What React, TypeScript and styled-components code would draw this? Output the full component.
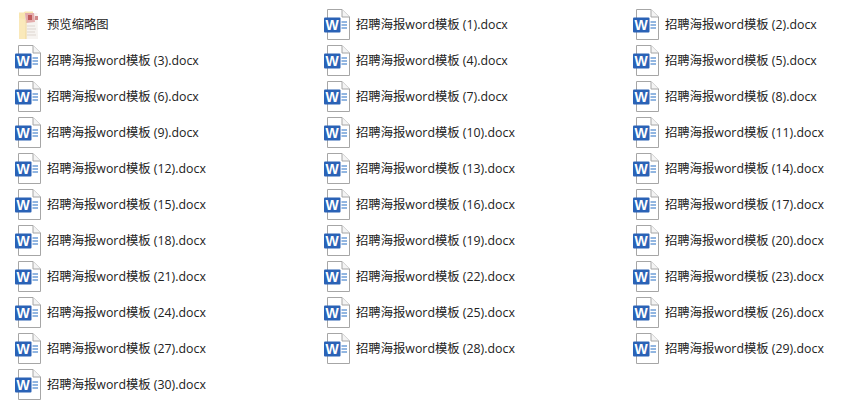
import React from "react";
import styled, { createGlobalStyle } from "styled-components";

const Global = createGlobalStyle`
  html, body { margin: 0; padding: 0; background: #fff; }
  body { width: 841px; height: 410px; overflow: hidden; }
`;

const Grid = styled.div`
  display: grid;
  box-sizing: border-box;
  width: 841px;
  grid-template-columns: 309px 309px 1fr;
  grid-auto-rows: 36px;
  padding: 6px 0 0 15px;
`;

const Item = styled.div`
  display: flex;
  align-items: center;
  gap: 6px;
  height: 36px;
`;

const IconBox = styled.svg`
  width: 26px;
  height: 32px;
  flex: none;
`;

const Label = styled.span`
  font-family: "Open Sans", "Noto Sans CJK SC", sans-serif;
  font-size: 12.35px;
  color: #222;
  white-space: nowrap;
  line-height: 16px;
  padding-top: 2px;
`;

const BadgeLetter = styled.text`
  font-family: "Liberation Sans", sans-serif;
  font-size: 14px;
  font-weight: 700;
  fill: #fff;
`;

const WordIcon = () => (
  <IconBox viewBox="0 0 26 32">
    <path d="M3.5 1.5H18L25.5 9V31.5H3.5Z" fill="#fff" stroke="#a6a6a6" />
    <path d="M18 1.5V9H25.5" fill="#f4f4f4" stroke="#a6a6a6" />
    <rect x="0" y="9.5" width="16.5" height="15" rx="1" fill="#2a62b6" />
    <BadgeLetter x="8.2" y="22" textAnchor="middle">W</BadgeLetter>
    <path d="M17.5 14h5.5M17.5 17h5.5M17.5 20h5.5" stroke="#6f9ed8" strokeWidth="1.3" />
  </IconBox>
);

const FolderIcon = () => (
  <IconBox viewBox="0 0 26 32">
    <path d="M4 4.5h4.5L10 3.5h8V31H4Z" fill="#f8e6b0" />
    <path d="M4 10l7 1.5V31H4Z" fill="#fae9ba" />
    <path d="M10 5h12.5L23 31H11Z" fill="#f6f3f0" />
    <path d="M10 5h9l1 9-9 1Z" fill="#e3abab" />
    <path d="M13 7h4v5h-4Z" fill="#c05c5c" />
    <path d="M20 8h3v4h-3Z" fill="#d08a8a" />
    <path d="M12 18h8M12 21h9M12 24h8M12 27h9" stroke="#ddd5cf" />
    <path d="M11 12v19" stroke="#efd696" />
  </IconBox>
);

const files = Array.from({ length: 30 }, (_, i) => `招聘海报word模板 (${i + 1}).docx`);

export default function App() {
  return (
    <>
      <Global />
      <Grid>
        <Item>
          <FolderIcon />
          <Label>预览缩略图</Label>
        </Item>
        {files.map((name) => (
          <Item key={name}>
            <WordIcon />
            <Label>{name}</Label>
          </Item>
        ))}
      </Grid>
    </>
  );
}
